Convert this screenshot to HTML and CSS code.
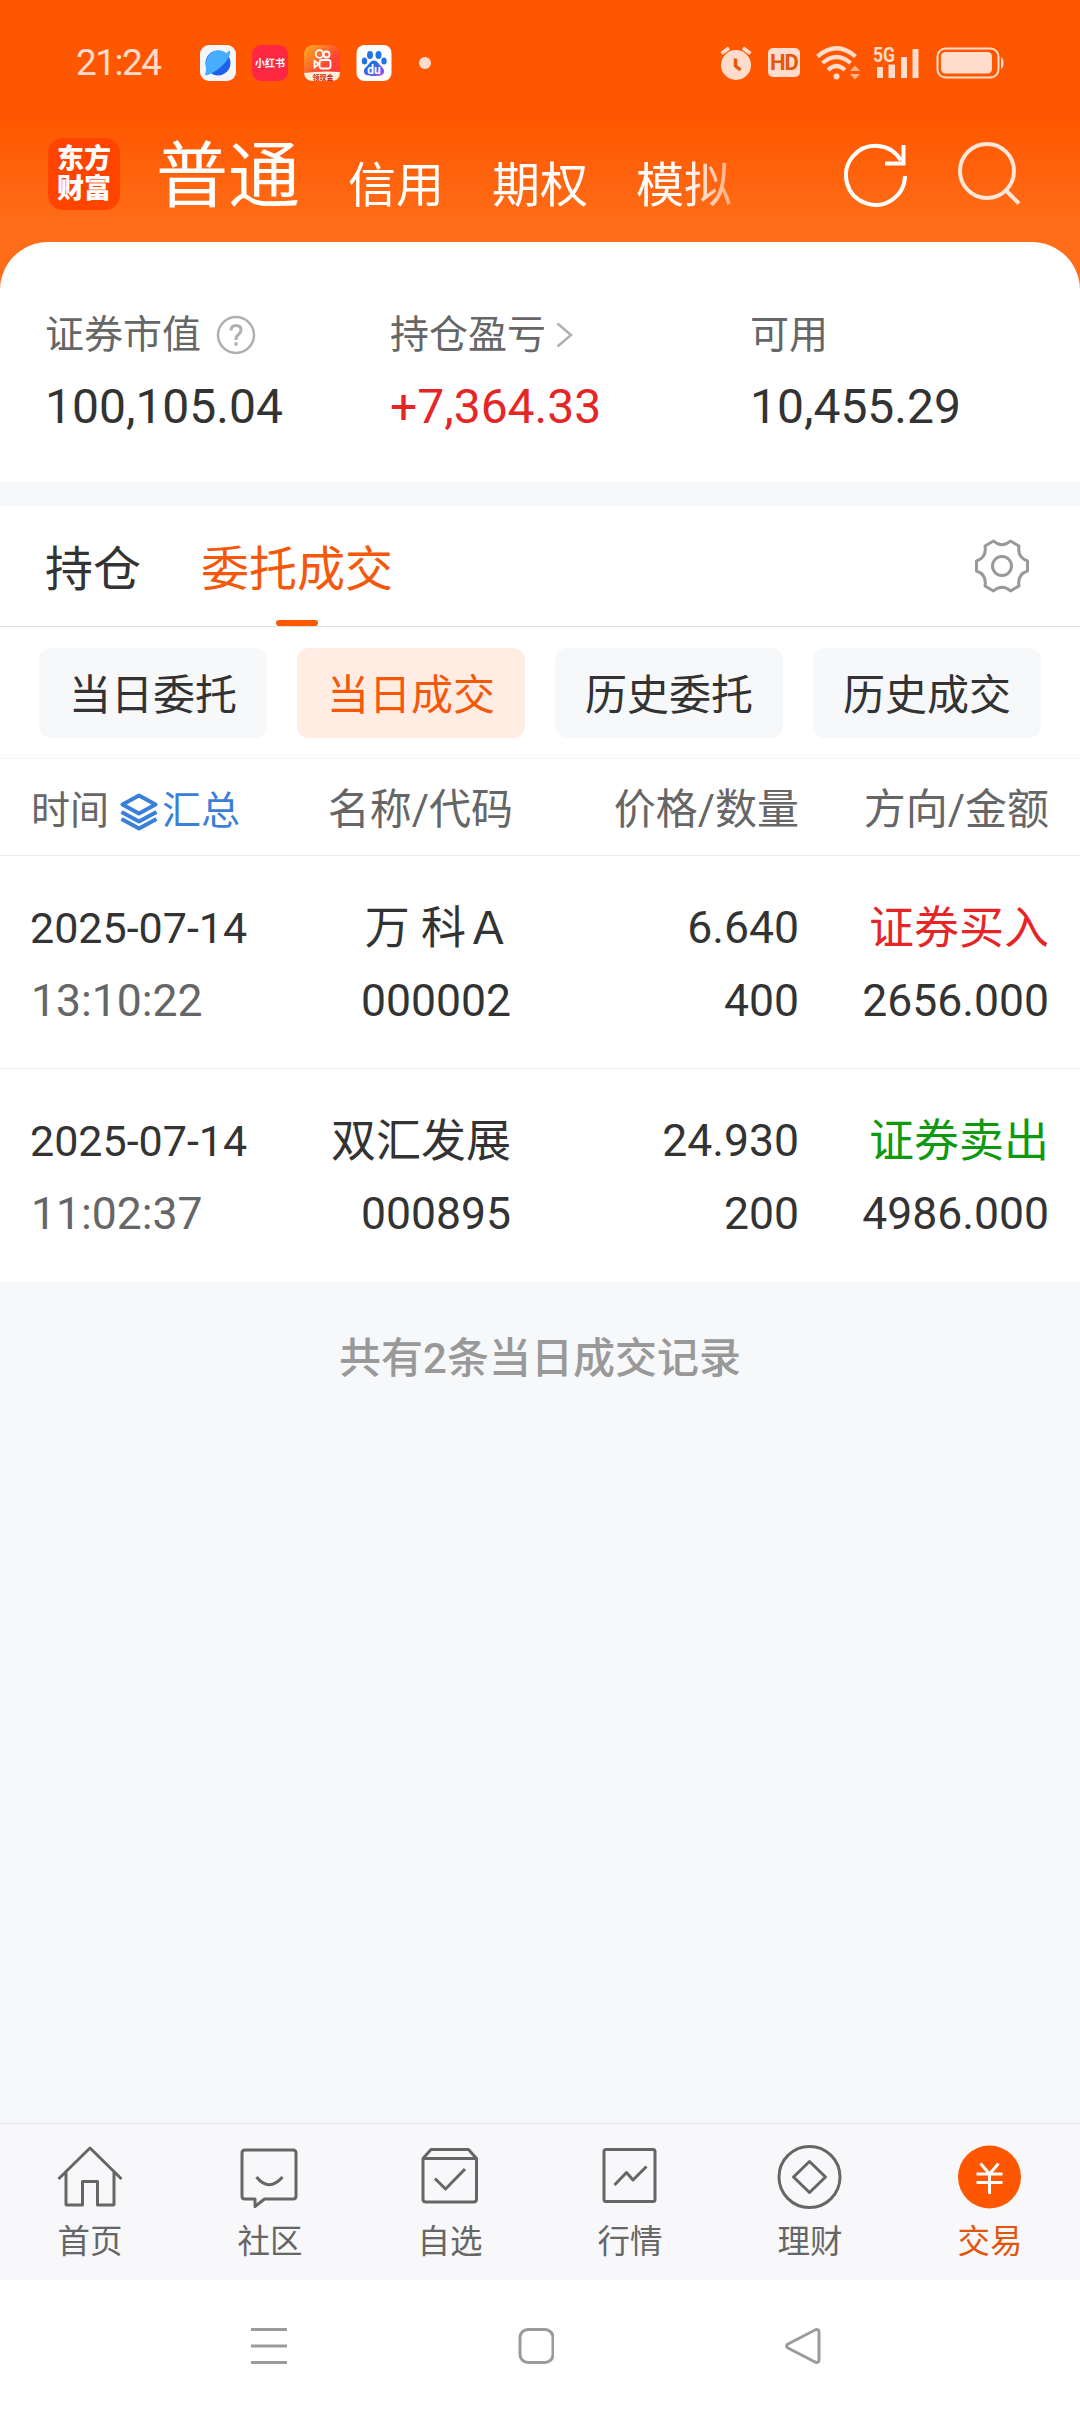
FILE: index.html
```html
<!DOCTYPE html>
<html lang="zh-CN">
<head>
  <meta charset="UTF-8">
  <meta name="viewport" content="width=device-width, initial-scale=1.0">
  <title>交易 - 当日成交</title>
  <link rel="stylesheet" href="styles.css">
</head>
<body>

  <!-- Top area -->
  <header class="top">
    <div class="status-bar">
      <span class="clock">21:24</span>
      <div class="app-icons">
        <svg width="36" height="36" viewBox="0 0 36 36">
          <rect width="36" height="36" rx="9" fill="#f3f5f8"/>
          <circle cx="18" cy="18" r="12.500" fill="#1c62ee"/>
          <path d="M6 24C4 14 10 5.500 18 5.500c4 0 7 1.500 8.500 3C28 6 30 5 30 6.500C31 14 18 27 6 30.500C4.500 29.500 6 27 6 24z" fill="#46aefc"/>
        </svg>
        <svg width="36" height="36" viewBox="0 0 36 36">
          <rect width="36" height="36" rx="9" fill="#ff2742"/>
          <text x="18" y="22" class="xhs-text">小红书</text>
        </svg>
        <svg width="36" height="36" viewBox="0 0 36 36">
          <defs>
            <linearGradient id="ks" x1="0" y1="0" x2="1" y2="1">
              <stop offset="0" stop-color="#ffb01f"/>
              <stop offset=".6" stop-color="#ff4433"/>
              <stop offset="1" stop-color="#ff3040"/>
            </linearGradient>
          </defs>
          <rect width="36" height="36" rx="9" fill="url(#ks)"/>
          <g fill="none" stroke="#fff" stroke-width="1.800">
            <circle cx="15.500" cy="9" r="3.800"/>
            <circle cx="22.500" cy="9.500" r="3"/>
            <rect x="15.500" y="15" width="11" height="8.500" rx="2.500"/>
            <path d="M15 19l-4.500-3v6.500z"/>
          </g>
          <path d="M0 28Q18 25.500 36 27Q36 36 27 36H9Q1 36 0 28z" fill="#fff1d6"/>
          <text x="19" y="34.500" class="ks-text">领现金</text>
        </svg>
        <svg width="36" height="36" viewBox="0 0 36 36">
          <defs>
            <linearGradient id="bd" x1="0" y1="0" x2="1" y2="1">
              <stop offset=".3" stop-color="#1f6fe8"/>
              <stop offset="1" stop-color="#a34fe8"/>
            </linearGradient>
          </defs>
          <rect x=".5" width="35" height="36" rx="8" fill="#fff"/>
          <g fill="#1f74ea">
            <ellipse cx="14" cy="10" rx="3" ry="4"/>
            <ellipse cx="22.500" cy="10" rx="3" ry="4"/>
            <ellipse cx="8.500" cy="16" rx="2.700" ry="3.500"/>
            <ellipse cx="28" cy="16" rx="2.700" ry="3.500"/>
          </g>
          <path d="M18 15.500c3 0 4.500 3 6.500 5s4 3.500 3.500 6.500c-.5 3.500-4 4-10 4s-9.500-.5-10-4c-.5-3 1.500-4.500 3.500-6.500s3.500-5 6.500-5z" fill="url(#bd)"/>
          <text x="18" y="28.500" class="bd-text">du</text>
        </svg>
      </div>
      <span class="dot"></span>

      <div class="system-icons">
        <svg width="32" height="34" viewBox="0 0 32 34">
          <circle cx="16" cy="19" r="15" fill="#ffdccb"/>
          <path d="M1.500 7.500L9 2M30.500 7.500L23 2" stroke="#ffdccb" stroke-width="3.500"/>
          <path d="M15.500 12.500v7.500l5 4" fill="none" stroke="#e8560c" stroke-width="3.500"/>
        </svg>
        <span class="hd">HD</span>
        <svg width="45" height="34" viewBox="0 0 45 34">
          <g fill="none" stroke="#ffdccb" stroke-width="4.200">
            <path d="M1.500 10.500Q20.500-6 39.500 10.500"/>
            <path d="M6.500 17Q20.500 5 34.500 17"/>
            <path d="M12 24Q20.500 16 29 24"/>
          </g>
          <circle cx="20.500" cy="30.500" r="3" fill="#ffdccb"/>
          <path d="M34 25l5-5.500 5 5.500zM34 28h10l-5 5.500z" fill="#ffb48f"/>
        </svg>
        <svg class="signal" width="47" height="41" viewBox="0 -4 47 41">
          <text x="0" y="16" class="net-text" textLength="22" lengthAdjust="spacingAndGlyphs">5G</text>
          <path d="M4 21h6v11H4zM15.500 18.500h6.500V32h-6.500zM28 11h6v21h-6zM39.500 3h6v29h-6z" fill="#ffdccb"/>
        </svg>
        <svg width="68" height="32" viewBox="0 0 68 32">
          <rect x="1.500" y="1.500" width="61" height="29" rx="8" fill="none" stroke="#ffdccb" stroke-width="2"/>
          <rect x="5" y="5" width="51" height="21.500" rx="4.500" fill="#ffdccb"/>
          <path d="M65 10q2.500 1 2.500 6t-2.500 6z" fill="#ffdccb"/>
        </svg>
      </div>
    </div>

    <div class="title-bar">
      <div class="logo">东方<br>财富</div>
      <nav class="account-tabs">
        <span class="account-tab current">普通</span>
        <span class="account-tab">信用</span>
        <span class="account-tab">期权</span>
        <span class="account-tab">模拟</span>
      </nav>
      <svg class="refresh" width="64" height="64" viewBox="0 0 64 64" fill="none" stroke="#fff" stroke-width="4">
        <path d="M61 33A29.500 29.500 0 1 1 57 17.500"/>
        <path d="M59.500 2v18.500H41"/>
      </svg>
      <svg class="search" width="64" height="64" viewBox="0 0 64 64" fill="none" stroke="#ffe6d8" stroke-width="4">
        <circle cx="30" cy="30" r="27"/>
        <path d="M49 49.500l13 13"/>
      </svg>
    </div>
  </header>

  <!-- Account summary -->
  <section class="summary">
    <div class="summary-item">
      <div class="label">证券市值
        <svg class="help" width="40" height="40" viewBox="0 0 40 40" fill="none" stroke="#b0b0b0" stroke-width="2.500">
          <circle cx="20" cy="20" r="18"/>
          <path d="M15 15.500q0-5 5-5t5 4.500q0 2.500-2.500 4.500T20 24v1" stroke-width="3"/>
          <circle cx="20" cy="29" r="1.200" stroke-width="1.500"/>
        </svg>
      </div>
      <div class="value">100,105.04</div>
    </div>
    <div class="summary-item">
      <div class="label">持仓盈亏
        <svg class="chevron" width="17" height="26" viewBox="0 0 17 26" fill="none" stroke="#b0b0b0" stroke-width="2.500">
          <path d="M1.500 1.500L15 13 1.500 24.500"/>
        </svg>
      </div>
      <div class="value up">+7,364.33</div>
    </div>
    <div class="summary-item">
      <div class="label">可用</div>
      <div class="value">10,455.29</div>
    </div>
  </section>

  <!-- Page tabs -->
  <div class="page-tabs">
    <span class="page-tab">持仓</span>
    <span class="page-tab active">委托成交</span>
    <svg class="gear" width="56" height="56" viewBox="-28 -28 56 56" fill="none" stroke="#999" stroke-width="3" stroke-linejoin="round">
      <path d="M-8.500-25Q0-17.500 8.500-25L17-20Q15-8.500 25.500-5V5Q15 8.500 17 20L8.500 25Q0 17.500-8.500 25L-17 20Q-15 8.500-25.500 5V-5Q-15-8.500-17-20z"/>
      <circle r="9.500"/>
    </svg>
  </div>

  <div class="filters">
    <button class="filter">当日委托</button>
    <button class="filter active">当日成交</button>
    <button class="filter">历史委托</button>
    <button class="filter">历史成交</button>
  </div>

  <!-- Deals -->
  <div class="deals">
    <div class="deal-head">
      <div class="head-time">时间
        <svg class="layers" width="38" height="38" viewBox="0 0 38 38" fill="none" stroke="#3a80d8" stroke-width="4" stroke-linejoin="round">
          <path d="M19 2.500L35.500 11.500 19 20.500 2.500 11.500z"/>
          <path d="M1.500 19L19 28.500 36.500 19M1.500 26L19 35.500 36.500 26"/>
        </svg>
        <span class="sum-link">汇总</span>
      </div>
      <div>名称/代码</div>
      <div>价格/数量</div>
      <div>方向/金额</div>
    </div>

    <div class="deal-row">
      <div><p class="date">2025-07-14</p><p class="num time">13:10:22</p></div>
      <div><p>万 科Ａ</p><p class="num">000002</p></div>
      <div><p class="num">6.640</p><p class="num">400</p></div>
      <div><p class="buy">证券买入</p><p class="num">2656.000</p></div>
    </div>
    <div class="deal-row">
      <div><p class="date">2025-07-14</p><p class="num time">11:02:37</p></div>
      <div><p>双汇发展</p><p class="num">000895</p></div>
      <div><p class="num">24.930</p><p class="num">200</p></div>
      <div><p class="sell">证券卖出</p><p class="num">4986.000</p></div>
    </div>
  </div>

  <div class="total">共有2条当日成交记录</div>

  <!-- Bottom menu -->
  <nav class="menu">
    <a class="menu-item">
      <svg width="66" height="66" viewBox="0 0 66 66">
        <path d="M1.500 35L33 4l31.500 31M9 28.500V60q0 1 1 1h15.500V37.500h15V61H56q1 0 1-1V28.500"/>
      </svg>
      首页
    </a>
    <a class="menu-item">
      <svg width="66" height="66" viewBox="0 0 66 66">
        <path d="M8 6h48q3 0 3 3v43q0 3-3 3H27.500l-9.500 7.500V55H8q-3 0-3-3V9q0-3 3-3z"/>
        <path d="M19.500 33q12.500 15.500 26 0"/>
      </svg>
      社区
    </a>
    <a class="menu-item">
      <svg width="66" height="66" viewBox="0 0 66 66">
        <path d="M6 14.500l8-9h37.500l8 9V55q0 3-3 3H9q-3 0-3-3zM6 14.500h53.500M18 34.500l10.500 10.500L48 25"/>
      </svg>
      自选
    </a>
    <a class="menu-item">
      <svg width="66" height="66" viewBox="0 0 66 66">
        <rect x="7" y="5.500" width="51" height="52" rx="2"/>
        <path d="M17.500 41L29.500 28.500 36 36 49.500 22.500"/>
      </svg>
      行情
    </a>
    <a class="menu-item">
      <svg width="66" height="66" viewBox="0 0 66 66">
        <circle cx="32.500" cy="33" r="30.500"/>
        <path d="M32.500 17.500L48.500 33 32.500 48.500 16.500 33z"/>
      </svg>
      理财
    </a>
    <a class="menu-item active">
      <svg width="66" height="66" viewBox="0 0 66 66">
        <circle class="disc" cx="32.500" cy="33" r="31.500"/>
        <path class="yen" d="M23.500 19.500l9 10.500 9-10.500M32.500 30v20M19.500 30h26M19.500 38.500h26"/>
      </svg>
      交易
    </a>
  </nav>

  <!-- System navigation -->
  <div class="system-nav">
    <svg width="36" height="36" viewBox="0 0 36 36">
      <path d="M0 1.500h36M0 18h36M0 34.500h36"/>
    </svg>
    <svg width="36" height="36" viewBox="0 0 36 36">
      <rect x="2" y="1.500" width="33" height="33" rx="8"/>
    </svg>
    <svg width="36" height="36" viewBox="0 0 36 36">
      <path d="M3 16L30 2q4-1.500 4 2v28q0 3.500-4 2L3 20q-3-2 0-4z"/>
    </svg>
  </div>

</body>
</html>
```
FILE: styles.css
```css
/* Basic Reset */
* {
  margin: 0;
  padding: 0;
  box-sizing: border-box;
}

body {
  display: flex;
  flex-direction: column;
  width: 1080px;
  height: 2412px;
  background-color: #f7f8fa;
  color: #333;
  font-family: Roboto, "Noto Sans CJK SC", sans-serif;
}

svg {
  display: block;
  flex-shrink: 0;
}

/* Top area */
.top {
  height: 290px;
  margin-bottom: -48px;
  background: linear-gradient(#ff5700 0, #ff5700 120px, #ff6d18 225px, #ff6d18 100%);
}

.status-bar {
  display: flex;
  align-items: center;
  height: 125px;
  padding: 0 76px 0 76px;
  color: #ffdccb;
}

.clock {
  width: 124px;
  font-size: 37px;
  letter-spacing: -1.500px;
}

.app-icons {
  display: flex;
  gap: 16px;
}

.dot {
  width: 12px;
  height: 12px;
  margin-left: 27px;
  border-radius: 50%;
  background-color: #ffdccb;
}

.system-icons {
  display: flex;
  align-items: center;
  gap: 16px;
  margin-left: auto;
}

.signal {
  margin-left: -4px;
}

.hd {
  width: 32px;
  height: 29px;
  border-radius: 5px;
  background-color: #ffdccb;
  color: #e8560c;
  font-size: 22px;
  font-weight: bold;
  line-height: 29px;
  letter-spacing: -1px;
  text-align: center;
}

.xhs-text,
.ks-text,
.bd-text {
  text-anchor: middle;
  font-weight: bold;
  font-size: 10px;
  fill: #fff;
}

.ks-text {
  font-size: 7px;
  fill: #d02010;
}

.bd-text {
  font-size: 12px;
}

.net-text {
  font-size: 21px;
  font-weight: bold;
  fill: #ffdccb;
}

/* Title bar */
.title-bar {
  display: flex;
  height: 117px;
  padding-left: 48px;
  color: #fff;
}

.logo {
  width: 72px;
  height: 72px;
  margin-top: 13px;
  padding-top: 6px;
  border-radius: 15px;
  background-color: #ff4400;
  font-size: 27px;
  font-weight: 900;
  line-height: 30px;
  text-align: center;
}

.account-tabs {
  display: flex;
  align-items: flex-start;
  width: 618px;
  height: 117px;
  margin-left: 36px;
  white-space: nowrap;
  -webkit-mask-image: linear-gradient(90deg, #000 530px, rgba(0, 0, 0, 0.4) 580px);
  mask-image: linear-gradient(90deg, #000 530px, rgba(0, 0, 0, 0.4) 580px);
}

.account-tab {
  flex-shrink: 0;
  margin-right: 48px;
  font-size: 48px;
  line-height: 122px;
}

.account-tab.current {
  font-size: 72px;
  line-height: 103px;
}

.refresh {
  margin: 18px 0 0 70px;
}

.search {
  margin: 16px 0 0 49px;
}

/* Account summary */
.summary {
  display: flex;
  height: 240px;
  padding: 64px 0 0 45px;
  border-radius: 48px 48px 0 0;
  background-color: #fff;
}

.summary-item {
  flex-shrink: 0;
  width: 345px;
}

.summary-item:nth-child(2) {
  width: 360px;
}

.summary-item:last-child {
  width: 284px;
}

.label {
  display: flex;
  align-items: center;
  height: 57px;
  color: #666;
  font-size: 39px;
  line-height: 50px;
}

.help {
  margin-left: 15px;
}

.chevron {
  margin-left: 10px;
}

.value {
  margin-top: 16px;
  font-size: 48px;
  line-height: 56px;
}

.value.up,
.buy {
  color: #e62626;
}

.sell {
  color: #0f990f;
}

/* Page tabs */
.page-tabs {
  display: flex;
  height: 121px;
  margin-top: 24px;
  padding: 0 50px 0 45px;
  border-bottom: 1px solid #dedede;
  background-color: #fff;
}

.page-tab {
  height: 120px;
  margin-right: 60px;
  font-size: 48px;
  line-height: 127px;
}

.page-tab.active {
  position: relative;
  color: #f4580a;
}

.page-tab.active::after {
  content: "";
  position: absolute;
  left: 50%;
  bottom: 0;
  width: 42px;
  height: 6px;
  margin-left: -21px;
  border-radius: 3px;
  background-color: #ff5700;
}

.gear {
  align-self: center;
  margin-left: auto;
}

/* Filters */
.filters {
  display: flex;
  gap: 30px;
  height: 132px;
  padding: 21px 39px 0;
  border-bottom: 1px solid #f5f5f5;
  background-color: #fff;
}

.filter {
  width: 228px;
  height: 90px;
  padding-bottom: 3px;
  border: none;
  border-radius: 12px;
  background-color: #f7f8fa;
  color: #333;
  font-family: inherit;
  font-size: 42px;
}

.filter.active {
  background-color: #ffede4;
  color: #f4580a;
}

/* Deals */
.deals {
  background-color: #fff;
}

.deal-head,
.deal-row {
  display: grid;
  grid-template-columns: 241px 240px 288px 250px;
  padding: 0 30px;
  border-bottom: 1px solid #ebebeb;
  text-align: right;
}

.deal-head {
  grid-template-columns: 243px 240px 286px 250px;
  height: 97px;
  color: #666;
  font-size: 42px;
  line-height: 101px;
}

.head-time {
  display: flex;
  align-items: center;
  padding: 2px 0 0 1px;
  font-size: 39px;
}

.layers {
  margin-left: 11px;
}

.sum-link {
  margin-left: 4px;
  color: #3a80d8;
}

.deal-row {
  height: 213px;
  padding-top: 36px;
  font-size: 45px;
  line-height: 73px;
}

.deal-row:last-child {
  border-bottom: none;
}

.deal-row > div:first-child {
  text-align: left;
}

.deal-row .num {
  font-size: 44.500px;
}

.date {
  font-size: 43px;
  line-height: 72px;
}

.time {
  padding-left: 1px;
  line-height: 74px;
  color: #666;
}

.total {
  margin-top: 46px;
  color: #999;
  font-size: 42px;
  font-weight: 500;
  line-height: 62px;
  text-align: center;
}

/* Bottom menu */
.menu {
  display: flex;
  height: 157px;
  margin-top: auto;
  border-top: 1px solid #e0e3e7;
  background-color: #f8f8fa;
}

.menu-item {
  display: flex;
  flex-direction: column;
  align-items: center;
  width: 180px;
  padding-top: 20px;
  color: #666;
  font-size: 32.500px;
  line-height: 64px;
}

.menu-item svg {
  fill: none;
  stroke: #666;
  stroke-width: 3;
  stroke-linejoin: round;
}

.menu-item.active {
  color: #e0560f;
}

.menu-item .disc {
  fill: #ff5700;
  stroke: none;
}

.menu-item .yen {
  stroke: #fff;
}

/* System navigation */
.system-nav {
  display: flex;
  gap: 231px;
  height: 132px;
  padding: 48px 0 0 251px;
  background-color: #fff;
}

.system-nav svg {
  fill: none;
  stroke: #9b9b9b;
  stroke-width: 3;
}
```
